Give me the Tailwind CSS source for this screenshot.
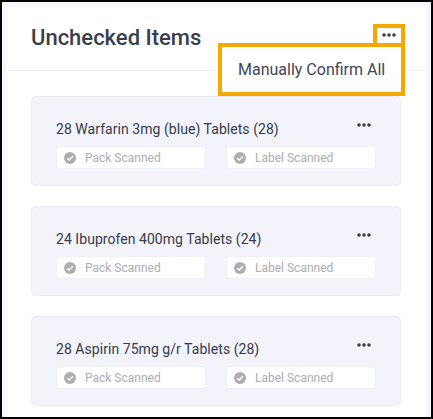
<!DOCTYPE html>
<html>
<head>
<meta charset="utf-8">
<script src="https://cdn.jsdelivr.net/npm/@tailwindcss/browser@4"></script>
</head>
<body class="m-0">
<div class="relative h-[419px] w-[433px] overflow-hidden border-2 border-black bg-[#f5f7fd] pl-[5px] pr-[5px] pt-[5px] font-['Roboto',sans-serif]">
  <div class="h-[420px] rounded-t-[4px] bg-white">
    <div class="flex h-[64px] items-start border-b border-[#eef0f7] pl-[24px] pt-[16px]">
      <h1 class="text-[22px] font-medium leading-[30px] text-[#3a3f4b]">Unchecked Items</h1>
    </div>
    <div class="flex flex-col gap-[20px] pl-[24px] pt-[25px]">
      <div class="h-[90px] w-[370px] rounded-[5px] border border-[#e9ebf5] bg-[#f2f3fb] pl-[24px] pr-[24px] pt-[20px]">
        <div class="flex h-[24px] items-center justify-between">
          <span class="text-[14px] leading-[24px] tracking-[0.05px] text-[#363b47]">28 Warfarin 3mg (blue) Tablets (28)</span>
          <svg class="mb-[9px] mr-[5px] h-[4px] w-[14px]" viewBox="0 0 14 4"><circle cx="2" cy="2" r="1.8" fill="#3a3f4b"/><circle cx="7" cy="2" r="1.8" fill="#3a3f4b"/><circle cx="12" cy="2" r="1.8" fill="#3a3f4b"/></svg>
        </div>
        <div class="mt-[5px] flex gap-[20px]">
          <div class="flex h-[23px] w-[150px] items-center rounded-[4px] border border-[#eef0f8] bg-white pl-[7px]">
            <svg class="h-[12px] w-[12px]" viewBox="0 0 12 12"><circle cx="6" cy="6" r="6" fill="#aeaeae"/><path d="M3.2 6.2 5.2 8.1 8.9 4.2" fill="none" stroke="#fff" stroke-width="1.4"/></svg>
            <span class="ml-[9px] text-[12px] text-[#adadb2]">Pack Scanned</span>
          </div>
          <div class="flex h-[23px] w-[150px] items-center rounded-[4px] border border-[#eef0f8] bg-white pl-[7px]">
            <svg class="h-[12px] w-[12px]" viewBox="0 0 12 12"><circle cx="6" cy="6" r="6" fill="#aeaeae"/><path d="M3.2 6.2 5.2 8.1 8.9 4.2" fill="none" stroke="#fff" stroke-width="1.4"/></svg>
            <span class="ml-[9px] text-[12px] text-[#adadb2]">Label Scanned</span>
          </div>
        </div>
      </div>
      <div class="h-[90px] w-[370px] rounded-[5px] border border-[#e9ebf5] bg-[#f2f3fb] pl-[24px] pr-[24px] pt-[20px]">
        <div class="flex h-[24px] items-center justify-between">
          <span class="text-[14px] leading-[24px] tracking-[0.05px] text-[#363b47]">24 Ibuprofen 400mg Tablets (24)</span>
          <svg class="mb-[9px] mr-[5px] h-[4px] w-[14px]" viewBox="0 0 14 4"><circle cx="2" cy="2" r="1.8" fill="#3a3f4b"/><circle cx="7" cy="2" r="1.8" fill="#3a3f4b"/><circle cx="12" cy="2" r="1.8" fill="#3a3f4b"/></svg>
        </div>
        <div class="mt-[5px] flex gap-[20px]">
          <div class="flex h-[23px] w-[150px] items-center rounded-[4px] border border-[#eef0f8] bg-white pl-[7px]">
            <svg class="h-[12px] w-[12px]" viewBox="0 0 12 12"><circle cx="6" cy="6" r="6" fill="#aeaeae"/><path d="M3.2 6.2 5.2 8.1 8.9 4.2" fill="none" stroke="#fff" stroke-width="1.4"/></svg>
            <span class="ml-[9px] text-[12px] text-[#adadb2]">Pack Scanned</span>
          </div>
          <div class="flex h-[23px] w-[150px] items-center rounded-[4px] border border-[#eef0f8] bg-white pl-[7px]">
            <svg class="h-[12px] w-[12px]" viewBox="0 0 12 12"><circle cx="6" cy="6" r="6" fill="#aeaeae"/><path d="M3.2 6.2 5.2 8.1 8.9 4.2" fill="none" stroke="#fff" stroke-width="1.4"/></svg>
            <span class="ml-[9px] text-[12px] text-[#adadb2]">Label Scanned</span>
          </div>
        </div>
      </div>
      <div class="h-[90px] w-[370px] rounded-[5px] border border-[#e9ebf5] bg-[#f2f3fb] pl-[24px] pr-[24px] pt-[20px]">
        <div class="flex h-[24px] items-center justify-between">
          <span class="text-[14px] leading-[24px] tracking-[0.05px] text-[#363b47]">28 Aspirin 75mg g/r Tablets (28)</span>
          <svg class="mb-[9px] mr-[5px] h-[4px] w-[14px]" viewBox="0 0 14 4"><circle cx="2" cy="2" r="1.8" fill="#3a3f4b"/><circle cx="7" cy="2" r="1.8" fill="#3a3f4b"/><circle cx="12" cy="2" r="1.8" fill="#3a3f4b"/></svg>
        </div>
        <div class="mt-[5px] flex gap-[20px]">
          <div class="flex h-[23px] w-[150px] items-center rounded-[4px] border border-[#eef0f8] bg-white pl-[7px]">
            <svg class="h-[12px] w-[12px]" viewBox="0 0 12 12"><circle cx="6" cy="6" r="6" fill="#aeaeae"/><path d="M3.2 6.2 5.2 8.1 8.9 4.2" fill="none" stroke="#fff" stroke-width="1.4"/></svg>
            <span class="ml-[9px] text-[12px] text-[#adadb2]">Pack Scanned</span>
          </div>
          <div class="flex h-[23px] w-[150px] items-center rounded-[4px] border border-[#eef0f8] bg-white pl-[7px]">
            <svg class="h-[12px] w-[12px]" viewBox="0 0 12 12"><circle cx="6" cy="6" r="6" fill="#aeaeae"/><path d="M3.2 6.2 5.2 8.1 8.9 4.2" fill="none" stroke="#fff" stroke-width="1.4"/></svg>
            <span class="ml-[9px] text-[12px] text-[#adadb2]">Label Scanned</span>
          </div>
        </div>
      </div>
    </div>
  </div>
  <div class="absolute left-[371px] top-[22px] flex h-[23px] w-[32px] items-center justify-center border-[4px] border-[#f7a800] bg-white">
    <svg class="mb-[1px] h-[4px] w-[14px]" viewBox="0 0 14 4"><circle cx="2" cy="2" r="1.8" fill="#3a3f4b"/><circle cx="7" cy="2" r="1.8" fill="#3a3f4b"/><circle cx="12" cy="2" r="1.8" fill="#3a3f4b"/></svg>
  </div>
  <div class="absolute left-[216px] top-[41px] flex h-[53px] w-[187px] items-center border-[4px] border-[#f7a800] bg-white pl-[16px]">
    <span class="text-[16px] text-[#3f4657]">Manually Confirm All</span>
  </div>
</div>
</body>
</html>
